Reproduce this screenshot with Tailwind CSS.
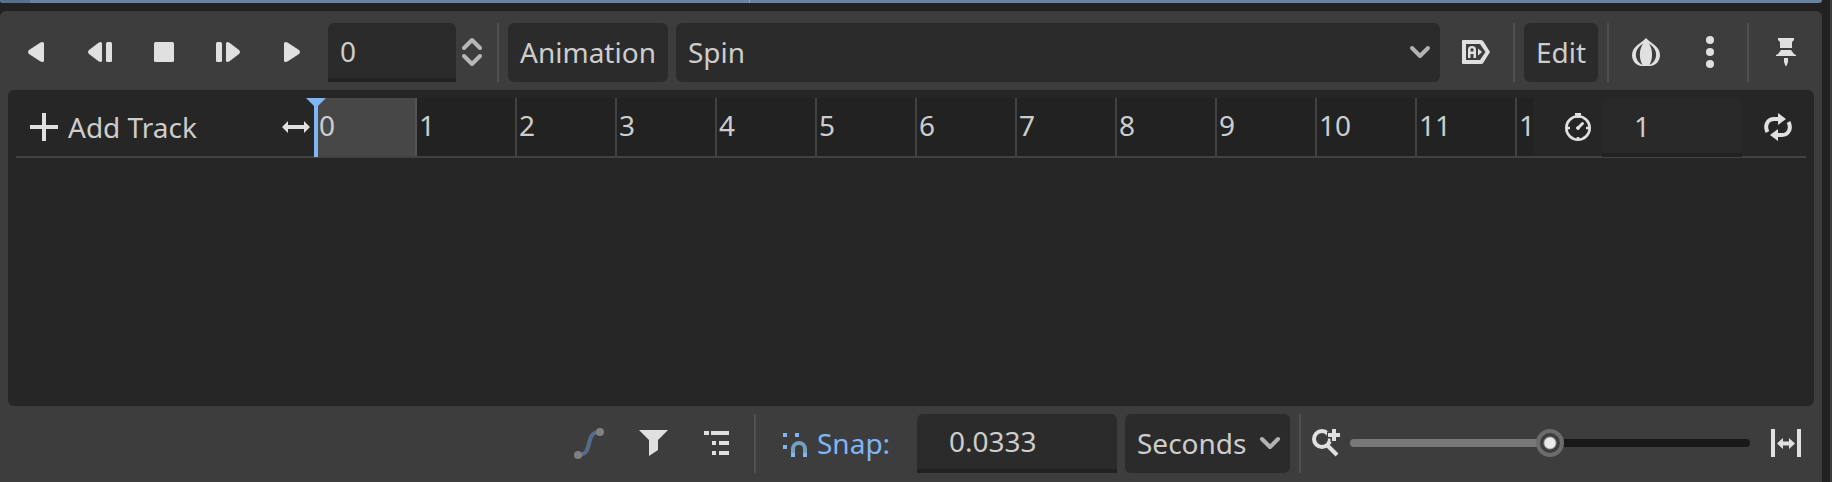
<!DOCTYPE html>
<html lang="en">
<head>
<meta charset="utf-8">
<title>Animation</title>
<script src="https://cdn.jsdelivr.net/npm/@tailwindcss/browser@4"></script>
</head>
<body class="flex h-screen overflow-hidden bg-[#222222] font-['Noto_Sans',sans-serif] text-[28px] leading-[38px] text-[#cdcdcd]">
<div class="flex min-w-0 flex-1 flex-col">
  <div class="flex h-[3px] shrink-0 overflow-hidden rounded-b-sm bg-[#6784a3]">
    <div class="w-[30px] bg-[#56718f]"></div>
    <div class="w-[720px] border-r border-[#8aa1ba]"></div>
  </div>

  <main class="mt-2 flex min-h-0 flex-1 flex-col rounded-t-md bg-[#3d3d3d] px-2">
    <div class="mt-3 mb-2 flex h-[59px] shrink-0 items-stretch gap-2" role="toolbar" aria-label="Playback">
      <button class="flex w-14 items-center justify-center pb-px" aria-label="Play backwards">
        <svg class="size-8 fill-[#e0e0e0]" viewBox="0 0 32 32"><path d="M24 7.5Q24 6 22.5 6L20.500 6.500L9 14Q7 16 9 18L20.500 25.500L22.500 26Q24 26 24 24.500Z"/></svg>
      </button>
      <button class="flex w-14 items-center justify-center pb-px" aria-label="Previous frame">
        <svg class="size-8 fill-[#e0e0e0]" viewBox="0 0 32 32"><path d="M18 7.500Q18 6 16.500 6L14.500 6.700L5 14Q3 16 5 18L14.500 25.300L16.500 26Q18 26 18 24.500Z"/><rect x="22" y="6" width="6" height="20" rx="1.500"/></svg>
      </button>
      <button class="flex w-14 items-center justify-center pb-px" aria-label="Stop">
        <svg class="size-8 fill-[#e0e0e0]" viewBox="0 0 32 32"><rect x="6" y="6" width="20" height="20" rx="1.500"/></svg>
      </button>
      <button class="flex w-14 items-center justify-center pb-px" aria-label="Next frame">
        <svg class="size-8 fill-[#e0e0e0]" viewBox="0 0 32 32"><path d="M14 7.500Q14 6 15.500 6L17.500 6.700L27 14Q29 16 27 18L17.500 25.300L15.500 26Q14 26 14 24.500Z"/><rect x="4" y="6" width="6" height="20" rx="1.500"/></svg>
      </button>
      <button class="flex w-14 items-center justify-center pb-px" aria-label="Play">
        <svg class="size-8 fill-[#e0e0e0]" viewBox="0 0 32 32"><path d="M8 7.500Q8 6 9.500 6L11.500 6.500L23 14Q25 16 23 18L11.500 25.500L9.500 26Q8 26 8 24.500Z"/></svg>
      </button>
      <div class="flex items-stretch">
        <input class="w-32 rounded-t-md border-b-4 border-[#222222] bg-[#2b2b2b] px-3 outline-none" aria-label="Current position" value="0">
        <button class="flex w-8 items-center justify-center pb-px" aria-label="Step position">
          <svg class="size-8 fill-none stroke-[#b8b8b8] stroke-4" stroke-linecap="round" stroke-linejoin="round" viewBox="0 0 32 32"><path d="M8 12l8-8 8 8M8 20l8 8 8-8"/></svg>
        </button>
      </div>
      <div class="flex w-1 justify-center"><div class="w-0.5 bg-[#505050]"></div></div>
      <button class="w-40 rounded-md bg-[#2b2b2b] pb-px">Animation</button>
      <div class="relative flex min-w-0 flex-1">
        <select class="w-full appearance-none rounded-md bg-[#2b2b2b] px-3 pb-px outline-none" aria-label="Animation name"><option>Spin</option></select>
        <svg class="pointer-events-none absolute top-0 right-1 bottom-px my-auto size-8 fill-none stroke-[#b2b2b2] stroke-4" stroke-linecap="round" stroke-linejoin="round" viewBox="0 0 32 32"><path d="M8 12l8 8 8-8"/></svg>
      </div>
      <button class="flex w-14 items-center justify-center pb-px" aria-label="Autoplay on load">
        <svg class="size-8 fill-[#e0e0e0]" viewBox="0 0 32 32"><path fill-rule="evenodd" d="M3 4H21Q22.500 4 23.500 5.500L30 16L23.500 26.500Q22.500 28 21 28H3Q2 28 2 27V5Q2 4 3 4ZM6 8V24H20L25.500 16L20 8Z"/><path d="M8 22V13.500Q8 10 12 10T16 13.500V22H13.500V18H10.500V22ZM10.500 15.500H13.500V13.500Q13.500 12.300 12 12.300T10.500 13.500Z" fill-rule="evenodd"/><path d="M18 12.500L22 16L18 19.500Z"/></svg>
      </button>
      <div class="flex w-1 justify-center"><div class="w-0.5 bg-[#505050]"></div></div>
      <button class="w-[74px] rounded-md bg-[#2b2b2b] pb-px">Edit</button>
      <div class="flex w-1 justify-center"><div class="w-0.5 bg-[#505050]"></div></div>
      <button class="flex w-14 items-center justify-center pb-px" aria-label="Onion skinning">
        <svg class="size-8" viewBox="0 0 32 32"><path class="fill-[#e0e0e0]" d="M16 2C12 7 2 10 2 19C2 25 6 29 11 30H21C26 29 30 25 30 19C30 10 20 7 16 2Z"/><path class="fill-[#3d3d3d]" d="M13 7.500C3.500 13.500 3.500 24 12.500 29C9 23 9 13.500 13 7.500ZM19 7.500C28.500 13.500 28.500 24 19.500 29C23 23 23 13.500 19 7.500Z"/></svg>
      </button>
      <button class="flex w-14 items-center justify-center pb-px" aria-label="Onion skinning options">
        <svg class="size-8 fill-[#e0e0e0]" viewBox="0 0 32 32"><circle cx="16" cy="4" r="4"/><circle cx="16" cy="16" r="4"/><circle cx="16" cy="28" r="4"/></svg>
      </button>
      <div class="flex w-1 justify-center"><div class="w-0.5 bg-[#505050]"></div></div>
      <button class="flex w-14 items-center justify-center pb-px" aria-label="Pin animation player">
        <svg class="size-8 fill-[#e0e0e0]" viewBox="0 0 32 32"><path d="M8 2H24V4L22 6V12H10V6L8 4ZM11 14H21L24 18L26 19V20H6V19L8 18ZM14 22H18V26L16.500 30H15.500L14 26Z"/></svg>
      </button>
    </div>

    <section class="min-h-0 flex-1 rounded-md bg-[#262626] px-2 pt-2">
      <div class="relative flex h-[60px] border-b-2 border-[#424242]">
        <div class="flex w-[299px] shrink-0 items-center justify-between pr-[3px] pl-3">
          <button class="flex items-center gap-2">
            <svg class="size-8 fill-none stroke-[#e0e0e0] stroke-4" viewBox="0 0 32 32"><path d="M16 2V30M2 16H30"/></svg>
            Add Track
          </button>
          <svg class="size-8 fill-[#e0e0e0]" viewBox="0 0 32 32"><path d="M2 16L8 10V14H24V10L30 16L24 22V18H8V22Z"/></svg>
        </div>
        <div class="flex min-w-0 flex-1 overflow-hidden bg-[#222222] leading-[54px]">
          <div class="w-[100px] shrink-0 bg-[#474747] pl-1">0</div>
          <div class="w-[100px] shrink-0 border-l-2 border-[#545454] pl-0.5">1</div>
          <div class="w-[100px] shrink-0 border-l-2 border-[#424242] pl-0.5">2</div>
          <div class="w-[100px] shrink-0 border-l-2 border-[#424242] pl-0.5">3</div>
          <div class="w-[100px] shrink-0 border-l-2 border-[#424242] pl-0.5">4</div>
          <div class="w-[100px] shrink-0 border-l-2 border-[#424242] pl-0.5">5</div>
          <div class="w-[100px] shrink-0 border-l-2 border-[#424242] pl-0.5">6</div>
          <div class="w-[100px] shrink-0 border-l-2 border-[#424242] pl-0.5">7</div>
          <div class="w-[100px] shrink-0 border-l-2 border-[#424242] pl-0.5">8</div>
          <div class="w-[100px] shrink-0 border-l-2 border-[#424242] pl-0.5">9</div>
          <div class="w-[100px] shrink-0 border-l-2 border-[#424242] pl-0.5">10</div>
          <div class="w-[100px] shrink-0 border-l-2 border-[#424242] pl-0.5">11</div>
          <div class="min-w-0 flex-1 border-l-2 border-[#424242] pl-0.5">1</div>
        </div>
        <svg class="absolute top-0 left-[290px] h-[59px] w-5 fill-[#80b5f6]" viewBox="0 0 20 59"><path d="M0 0H20L12 8V59H8V8Z"/></svg>
        <div class="-mb-px flex shrink-0 items-stretch gap-2 pl-[29px]">
          <svg class="mb-px size-8 self-center fill-none stroke-[#e0e0e0]" viewBox="0 0 32 32"><circle cx="16" cy="17" r="11.700" stroke-width="2.600"/><path stroke-width="2.600" d="M13 3.300H19M16 3V7M16 26V29M4 17H8M24 17H28"/><path stroke-width="3" stroke-linecap="round" d="M16.500 16.500L20.500 12.500"/><circle class="fill-[#e0e0e0]" cx="16" cy="17" r="1.500"/></svg>
          <input class="w-[140px] rounded-t-md border-b-4 border-[#222222] bg-[#292929] pl-8 outline-none" aria-label="Animation length" value="1">
          <button class="flex w-14 items-center justify-center pb-px" aria-label="Loop">
            <svg class="size-8" viewBox="0 0 32 32"><path class="fill-none stroke-[#e0e0e0] stroke-4" d="M5.500 21C2 14 6 8 12 8H17M26.500 11C30 18 26 24 20 24H15"/><path class="fill-[#e0e0e0]" d="M16 2L24 8L16 14ZM16 18L8 24L16 30Z"/></svg>
          </button>
        </div>
      </div>
    </section>

    <div class="mt-2 mb-[9px] flex h-[59px] shrink-0 items-stretch justify-end gap-2" role="toolbar" aria-label="Track editing">
      <button class="flex w-14 items-center justify-center pb-px" aria-label="Bezier editor" disabled>
        <svg class="size-8" viewBox="0 0 32 32"><path class="fill-none stroke-[#546c8c] stroke-4" d="M5 28C22 28 10 5 27 5"/><circle class="fill-[#808080]" cx="5" cy="28" r="4"/><circle class="fill-[#808080]" cx="27" cy="5" r="4"/></svg>
      </button>
      <button class="flex w-14 items-center justify-center pb-px" aria-label="Filter tracks">
        <svg class="size-8 fill-[#e0e0e0]" viewBox="0 0 32 32"><path d="M2 3H31L21 13V23L12 29V13Z"/></svg>
      </button>
      <button class="flex w-14 items-center justify-center pb-px" aria-label="Group tracks">
        <svg class="size-8 fill-[#e0e0e0]" viewBox="0 0 32 32"><path d="M3 4H8V8H3ZM10 4H28V8H10ZM11 14H15V18H11ZM18 14H28V18H18ZM11 24H15V28H11ZM18 24H28V28H18Z"/></svg>
      </button>
      <div class="flex w-1 justify-center"><div class="w-0.5 bg-[#505050]"></div></div>
      <button class="flex w-36 items-center gap-2 pb-px pl-3 text-[#80b5f6]" aria-pressed="true">
        <svg class="size-8" viewBox="0 0 32 32"><path class="fill-[#80b5f6]" d="M6 6H10V10H6ZM18 6H22V10H18ZM6 18H10V22H6ZM14 26H18V30H14ZM26 26H30V30H26Z"/><path class="fill-none stroke-[#749fbe] stroke-4" d="M16 26V22A6 6 0 0 1 28 22V26"/></svg>
        Snap:
      </button>
      <input class="w-[200px] rounded-t-md border-b-4 border-[#222222] bg-[#2b2b2b] pb-px pl-8 outline-none" aria-label="Snap step" value="0.0333">
      <div class="relative flex w-[165px]">
        <select class="w-full appearance-none rounded-md bg-[#2b2b2b] px-3 pb-px outline-none" aria-label="Snap unit"><option>Seconds</option></select>
        <svg class="pointer-events-none absolute top-0 right-1 bottom-px my-auto size-8 fill-none stroke-[#b2b2b2] stroke-4" stroke-linecap="round" stroke-linejoin="round" viewBox="0 0 32 32"><path d="M8 12l8 8 8-8"/></svg>
      </div>
      <div class="flex w-1 justify-center"><div class="w-0.5 bg-[#505050]"></div></div>
      <svg class="mb-px size-8 self-center fill-none stroke-[#e0e0e0] stroke-4" viewBox="0 0 32 32"><circle cx="12" cy="12" r="8"/><path d="M17 18L27 28"/><path class="stroke-[#3d3d3d] stroke-7" d="M24 2V15M17 8H30"/><path d="M24 2V14M18 8H30"/></svg>
      <input type="range" min="0" max="2" step="0.01" value="1" aria-label="Zoom" class="mb-px h-7 w-[400px] appearance-none self-center bg-transparent outline-none [&::-webkit-slider-runnable-track]:h-2 [&::-webkit-slider-runnable-track]:rounded-full [&::-webkit-slider-runnable-track]:bg-linear-to-r [&::-webkit-slider-runnable-track]:from-[#787878] [&::-webkit-slider-runnable-track]:from-50% [&::-webkit-slider-runnable-track]:to-[#191919] [&::-webkit-slider-runnable-track]:to-50% [&::-webkit-slider-thumb]:-mt-2.5 [&::-webkit-slider-thumb]:size-7 [&::-webkit-slider-thumb]:appearance-none [&::-webkit-slider-thumb]:rounded-full [&::-webkit-slider-thumb]:border-4 [&::-webkit-slider-thumb]:border-[#6c6c6c] [&::-webkit-slider-thumb]:bg-[radial-gradient(circle,#ebebeb_5px,#3d3d3d_7px)]">
      <button class="flex w-14 items-center justify-center pb-px" aria-label="Fit to panel">
        <svg class="size-8 fill-[#e0e0e0]" viewBox="0 0 32 32"><path d="M1 2H5V30H1ZM27 2H31V30H27ZM7 16.500L13 11V14.500H19V11L25 16.500L19 22V18.500H13V22Z"/></svg>
      </button>
    </div>
  </main>
</div>
<div class="ml-2 w-0.5 shrink-0 bg-[#3d3d3d]"></div>
</body>
</html>
